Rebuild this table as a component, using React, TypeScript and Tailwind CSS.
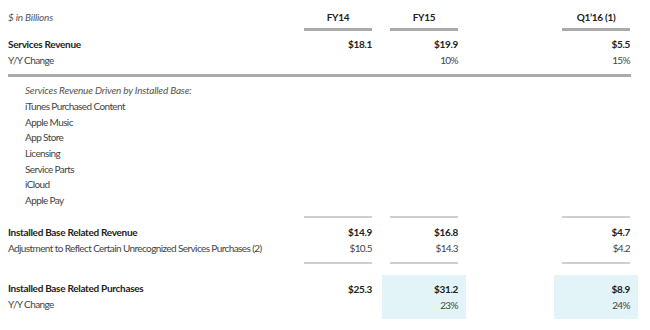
const font = "font-['Lato','Liberation_Sans',Arial,sans-serif] tracking-[-0.6px]";
const strong = "font-bold tracking-[-0.3px] text-[#222]";
const em = "italic tracking-[-0.2px] text-[#555]";

const services = [
  "iTunes Purchased Content",
  "Apple Music",
  "App Store",
  "Licensing",
  "Service Parts",
  "iCloud",
  "Apple Pay",
];

function Row({
  label,
  vals,
  bold,
}: {
  label: string;
  vals: [string, string, string];
  bold?: boolean;
}) {
  const w = bold ? strong : "text-[#444]";
  return (
    <div className={`flex h-4 items-center whitespace-nowrap ${w}`}>
      <div className="w-[296px]">{label}</div>
      <div className="w-[68px] text-right">{vals[0]}</div>
      <div className="ml-[18px] w-[68px] text-right">{vals[1]}</div>
      <div className="ml-[104px] w-[68px] text-right">{vals[2]}</div>
    </div>
  );
}

function ColLines({ thick }: { thick?: boolean }) {
  const c = thick ? "h-[3px] bg-[#a9abad]" : "h-[2px] bg-[#cdcfd1]";
  return (
    <div className="flex">
      <div className="w-[296px]" />
      <div className={`w-[68px] ${c}`} />
      <div className={`ml-[18px] w-[68px] ${c}`} />
      <div className={`ml-[104px] w-[68px] ${c}`} />
    </div>
  );
}

export default function App() {
  return (
    <div className={`w-[650px] h-[330px] overflow-hidden bg-white pl-2 pt-[9px] text-[10px] ${font}`}>
      {/* header */}
      <div className="flex h-4 items-center">
        <div className={`w-[296px] ${em}`}>$ in Billions</div>
        <div className={`w-[68px] text-center ${strong}`}>FY14</div>
        <div className={`ml-[18px] w-[68px] text-center ${strong}`}>FY15</div>
        <div className={`ml-[104px] w-[68px] text-center ${strong}`}>Q1’16 (1)</div>
      </div>
      <div className="mt-[3px]">
        <ColLines thick />
      </div>

      <div className="mt-[5px]">
        <Row label="Services Revenue" vals={["$18.1", "$19.9", "$5.5"]} bold />
        <Row label="Y/Y Change" vals={["", "10%", "15%"]} />
      </div>
      <div className="mt-[6px] h-[3px] w-[623px] bg-[#a9abad]" />

      <div className="mt-[6px] pl-[17px] text-[#444]">
        <div className={`flex h-[15.7px] items-center ${em}`}>
          Services Revenue Driven by Installed Base:
        </div>
        {services.map((s) => (
          <div key={s} className="flex h-[15.7px] items-center">
            {s}
          </div>
        ))}
      </div>

      <div className="mt-[7px]">
        <ColLines />
      </div>
      <div className="mt-[7px]">
        <Row label="Installed Base Related Revenue" vals={["$14.9", "$16.8", "$4.7"]} bold />
        <Row
          label="Adjustment to Reflect Certain Unrecognized Services Purchases (2)"
          vals={["$10.5", "$14.3", "$4.2"]}
        />
      </div>
      <div className="mt-[5px]">
        <ColLines />
      </div>

      {/* highlighted totals */}
      <div className="mt-[11px] flex">
        <div className="w-[296px] py-[6px]">
          <div className={`flex h-4 items-center ${strong}`}>Installed Base Related Purchases</div>
          <div className="flex h-4 items-center text-[#444]">Y/Y Change</div>
        </div>
        <div className="w-[68px] py-[6px] text-right">
          <div className={`h-4 leading-4 ${strong}`}>$25.3</div>
          <div className="h-4" />
        </div>
        <div className="ml-[10px] w-[84px] bg-[#e2f4f8] px-2 py-[6px] text-right">
          <div className={`h-4 leading-4 ${strong}`}>$31.2</div>
          <div className="h-4 leading-4 text-[#444]">23%</div>
        </div>
        <div className="ml-[88px] w-[84px] bg-[#e2f4f8] px-2 py-[6px] text-right">
          <div className={`h-4 leading-4 ${strong}`}>$8.9</div>
          <div className="h-4 leading-4 text-[#444]">24%</div>
        </div>
      </div>
    </div>
  );
}
